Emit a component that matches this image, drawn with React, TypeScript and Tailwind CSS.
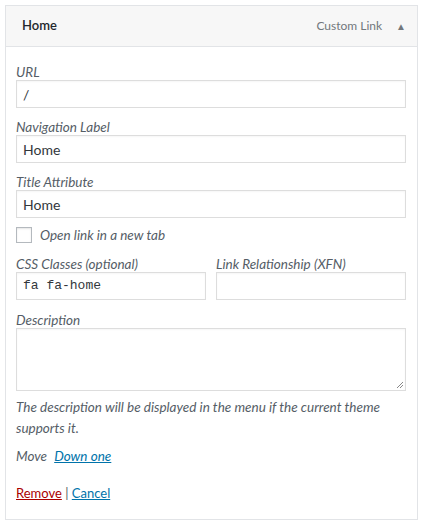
import React from 'react';

const font = { fontFamily: 'Lato, "Noto Sans", sans-serif' };

function Label({ children }: { children: React.ReactNode }) {
  return <div className="text-[13.5px] italic text-[#555d66] leading-[16px]">{children}</div>;
}

function Field({ label, value, mono, className = '' }: { label: string; value?: string; mono?: boolean; className?: string }) {
  return (
    <div className={className}>
      <Label>{label}</Label>
      <div
        className={`h-[28px] border border-[#dddddd] bg-white px-[6px] flex items-center text-[#32373c] shadow-[inset_0_1px_2px_rgba(0,0,0,0.04)] ${
          mono ? "font-['Liberation_Mono',monospace] text-[13px]" : 'text-[14px]'
        }`}
      >
        {value}
      </div>
    </div>
  );
}

export default function App() {
  return (
    <div className="w-[425px] h-[524px] bg-white pt-[5px] px-[5px]" style={font}>
      <div className="w-[413px] border border-[#e2e4e7] bg-white">
        {/* header */}
        <div className="h-[41px] bg-[#f7f7f7] border-b border-[#e2e4e7] flex items-center pl-[16px] pr-[11px]">
          <span className="text-[13px] font-semibold text-[#23282d] flex-1">Home</span>
          <span className="text-[12px] text-[#72777c]">Custom Link</span>
          <span className="ml-[14px] text-[10px] text-[#72777c]">▲</span>
        </div>

        {/* body */}
        <div className="pl-[10px] pr-[11px] pt-[17px] pb-[15px]">
          <Field label="URL" value="/" />
          <Field label="Navigation Label" value="Home" className="mt-[11px]" />
          <Field label="Title Attribute" value="Home" className="mt-[11px]" />

          <label className="flex items-center mt-[9px] h-[16px]">
            <span className="w-[16px] h-[16px] border border-[#b4b9be] bg-white shadow-[inset_0_1px_2px_rgba(0,0,0,0.1)]" />
            <span className="ml-[8px] text-[13.5px] italic text-[#555d66]">Open link in a new tab</span>
          </label>

          <div className="grid grid-cols-2 gap-[10px] mt-[13px]">
            <Field label="CSS Classes (optional)" value="fa fa-home" mono />
            <Field label="Link Relationship (XFN)" />
          </div>

          <div className="mt-[12px]">
            <Label>Description</Label>
            <div className="relative h-[63px] border border-[#dddddd] bg-white shadow-[inset_0_1px_2px_rgba(0,0,0,0.04)]">
              <svg className="absolute right-[1px] bottom-[1px]" width="9" height="9" viewBox="0 0 9 9">
                <path d="M8 2L2 8M8 5L5 8" stroke="#888" strokeWidth="1" />
              </svg>
            </div>
          </div>

          <p className="mt-[6px] text-[13.5px] italic text-[#555d66] leading-[21px]">
            The description will be displayed in the menu if the current theme supports it.
          </p>

          <div className="mt-[7px] text-[13.5px] italic text-[#555d66] leading-[21px]">
            Move <a className="ml-[4px] text-[#0073aa] underline">Down one</a>
          </div>

          <div className="mt-[16px] text-[13px] leading-[21px] text-[#555d66]">
            <a className="text-[#a00] underline">Remove</a> | <a className="text-[#0073aa] underline">Cancel</a>
          </div>
        </div>
      </div>
    </div>
  );
}
